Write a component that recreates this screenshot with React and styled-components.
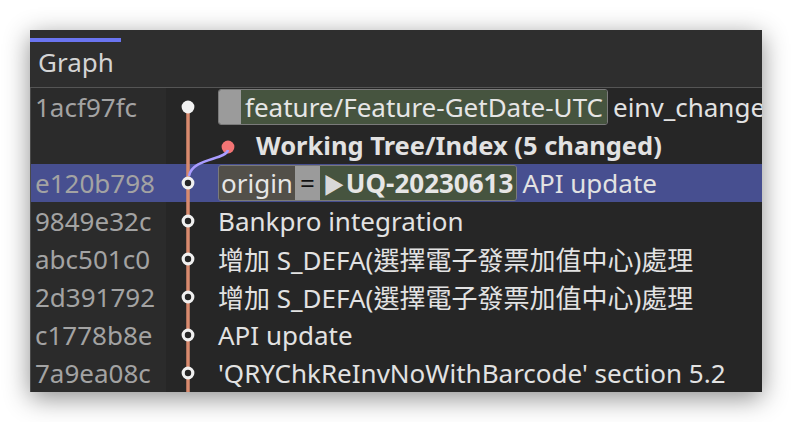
import React from 'react';
import styled, { createGlobalStyle } from 'styled-components';

const Global = createGlobalStyle`
  html, body {
    margin: 0;
    padding: 0;
    background: #ffffff;
  }
`;

const Page = styled.div`
  width: 792px;
  height: 422px;
  padding: 30px;
  box-sizing: border-box;
`;

const Window = styled.div`
  width: 732px;
  height: 362px;
  background: #262626;
  overflow: hidden;
  display: flex;
  flex-direction: column;
  box-shadow: 0 6px 24px rgba(0, 0, 0, 0.45);
  font-family: 'Noto Sans', 'Noto Sans CJK TC', sans-serif;
`;

const Header = styled.div`
  height: 58px;
  flex: none;
  background: #2e2e2e;
  padding-top: 8px;
  box-sizing: border-box;
  border-bottom: 1px solid #555555;
`;

const TabIndicator = styled.div`
  width: 91px;
  height: 4px;
  background: #6a74f0;
`;

const HeaderTitle = styled.div`
  padding-left: 8px;
  margin-top: 2px;
  font-size: 26px;
  line-height: 36px;
  color: #d4d4d4;
`;

const List = styled.div`
  display: flex;
  flex-direction: column;
  border-left: 1px solid #4a4a4a;
`;

const Row = styled.div`
  height: 38px;
  flex: none;
  display: flex;
  align-items: center;
  background: ${p => (p.selected ? '#474f90' : 'transparent')};
`;

const Sha = styled.div`
  width: 135px;
  height: 100%;
  flex: none;
  display: flex;
  align-items: center;
  padding-left: 4px;
  box-sizing: border-box;
  background: ${p => (p.selected ? 'transparent' : '#2b2b2b')};
  color: #a3a3a3;
  font-size: 26px;
`;

const Graph = styled.svg`
  flex: none;
  overflow: visible;
  display: block;
`;

const Message = styled.div`
  display: flex;
  align-items: center;
  white-space: nowrap;
  gap: 5px;
  color: #e2e2e2;
  font-size: ${p => (p.bold ? 25.5 : 26)}px;
  font-weight: ${p => (p.bold ? 700 : 400)};
`;

const RefBox = styled.div`
  display: flex;
  height: 36px;
  border: 1px solid #7a7a7a;
  border-radius: 3px;
  overflow: hidden;
  box-sizing: border-box;
`;

const RefPart = styled.span`
  display: flex;
  align-items: center;
  padding: 0 ${p => p.pad ?? 2}px;
  min-width: ${p => p.min ?? 0}px;
  box-sizing: border-box;
  background: ${p => p.bg};
  color: ${p => p.fg ?? '#e6e6e6'};
  font-weight: ${p => (p.bold ? 700 : 400)};
`;

const Arrow = styled.span`
  font-size: 22px;
  color: #d8d8d8;
  margin-right: 1px;
`;

const LINE = '#d88a6e';
const LX = 22;

function Lane({ width = 52, top = 0, children }) {
  return (
    <Graph width={width} height={38} viewBox={`0 0 ${width} 38`}>
      <line x1={LX} y1={top} x2={LX} y2={38} stroke={LINE} strokeWidth={3.5} />
      {children}
    </Graph>
  );
}

const Hollow = () => <circle cx={LX} cy={19} r={4.8} fill="#262626" stroke="#f0f0f0" strokeWidth={3.2} />;

const commits = [
  ['9849e32c', 'Bankpro integration'],
  ['abc501c0', '增加 S_DEFA(選擇電子發票加值中心)處理'],
  ['2d391792', '增加 S_DEFA(選擇電子發票加值中心)處理'],
  ['c1778b8e', 'API update'],
  ['7a9ea08c', "'QRYChkReInvNoWithBarcode' section 5.2"],
];

export default function App() {
  return (
    <Page>
      <Global />
      <Window>
        <Header>
          <TabIndicator />
          <HeaderTitle>Graph</HeaderTitle>
        </Header>
        <List>
          <Row>
            <Sha>1acf97fc</Sha>
            <Lane top={19}>
              <circle cx={LX} cy={19} r={6.4} fill="#f2f2f2" />
            </Lane>
            <Message>
              <RefBox>
                <RefPart bg="#9b9b9b" min={22} />
                <RefPart bg="#46543f" pad={4}>feature/Feature-GetDate-UTC</RefPart>
              </RefBox>
              einv_changes
            </Message>
          </Row>
          <Row>
            <Sha />
            <Lane width={90}>
              <circle cx={62} cy={21} r={6.4} fill="#f27474" />
            </Lane>
            <Message bold>Working Tree/Index (5 changed)</Message>
          </Row>
          <Row selected>
            <Sha selected>e120b798</Sha>
            <Lane>
              <path d="M62,-14 C60,-4 26,-6 23,12" fill="none" stroke="#a99cff" strokeWidth={2.5} />
              <Hollow />
            </Lane>
            <Message>
              <RefBox>
                <RefPart bg="#524f49" pad={2}>origin</RefPart>
                <RefPart bg="#9b9b9b" fg="#111" pad={5}>=</RefPart>
                <RefPart bg="#46543f" bold pad={3}>
                  <Arrow>▶</Arrow>UQ-20230613
                </RefPart>
              </RefBox>
              API update
            </Message>
          </Row>
          {commits.map(([sha, msg]) => (
            <Row key={sha}>
              <Sha>{sha}</Sha>
              <Lane>
                <Hollow />
              </Lane>
              <Message>{msg}</Message>
            </Row>
          ))}
        </List>
      </Window>
    </Page>
  );
}
